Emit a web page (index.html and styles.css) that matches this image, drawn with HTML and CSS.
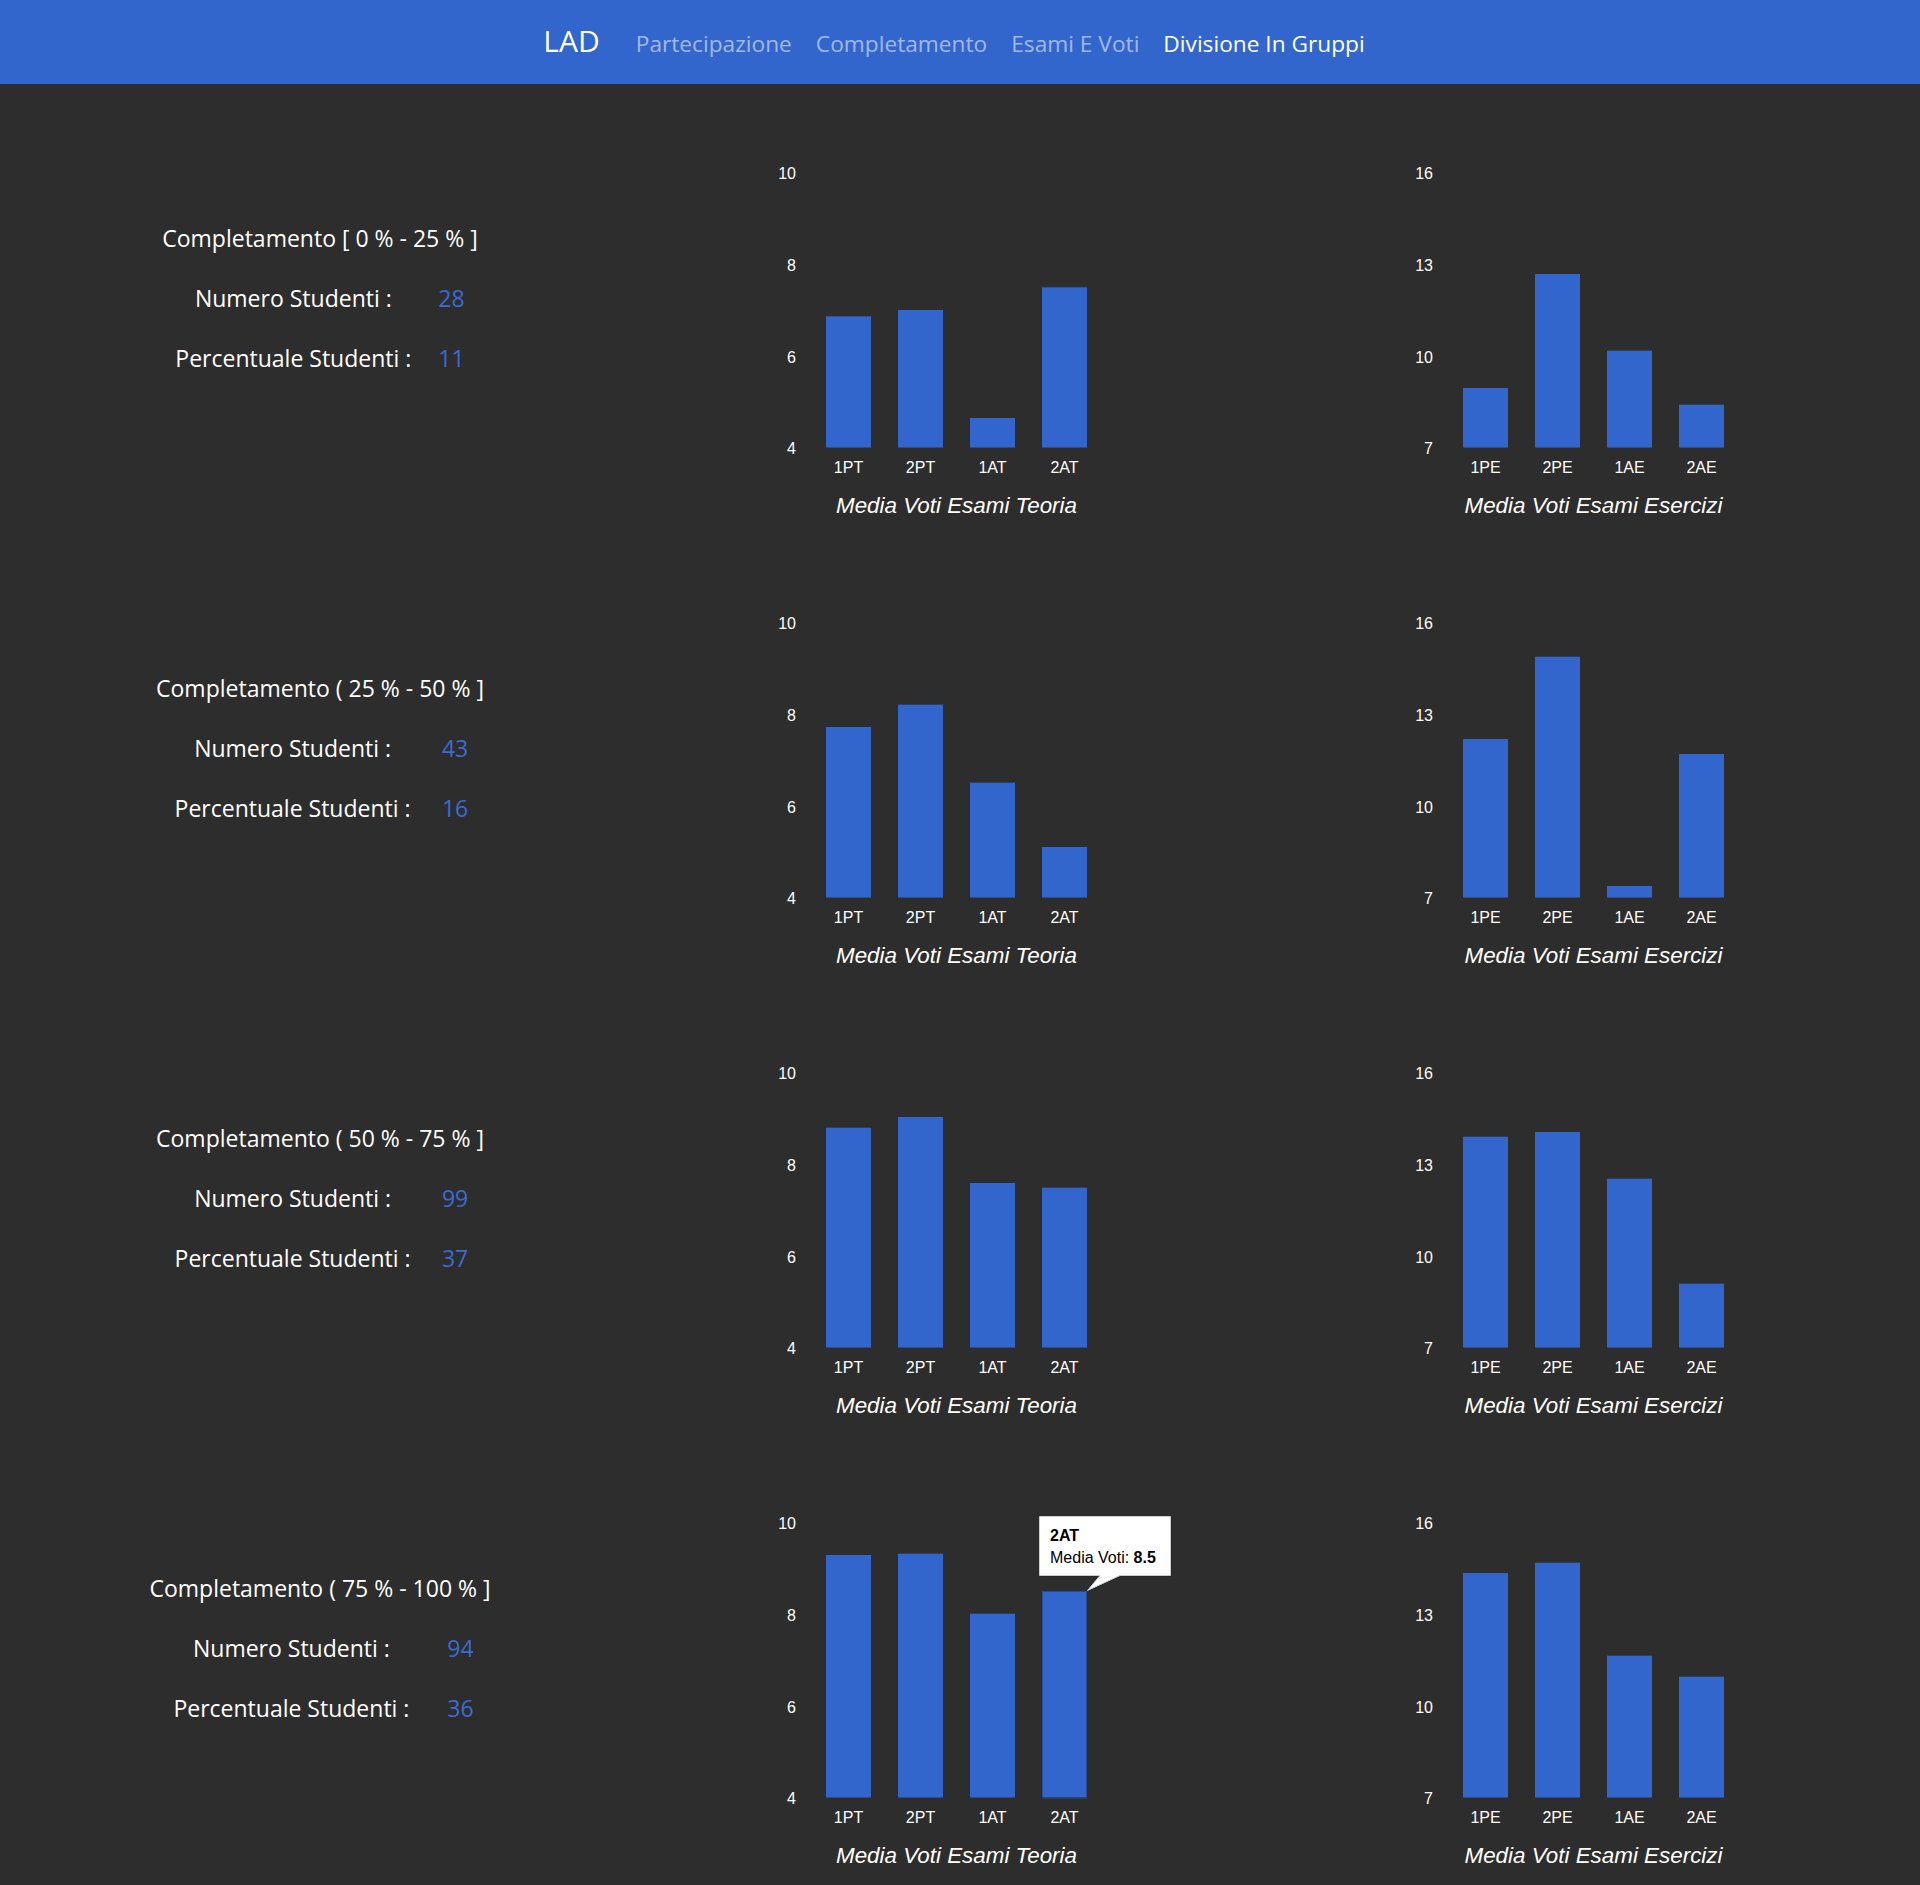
FILE: index.html
```html
<!DOCTYPE html>
<html lang="it">
<head>
<meta charset="utf-8">
<title>LAD - Divisione In Gruppi</title>
<link rel="stylesheet" href="styles.css">
</head>
<body>
<nav class="navbar">
  <a class="brand">LAD</a>
  <a class="nav-link">Partecipazione</a>
  <a class="nav-link">Completamento</a>
  <a class="nav-link">Esami E Voti</a>
  <a class="nav-link active">Divisione In Gruppi</a>
</nav>

<main class="main">
  <!-- Section 1 -->
  <section class="group">
    <div class="info">
      <table class="info-table">
        <tr><td class="title" colspan="2">Completamento [ 0 % - 25 % ]</td></tr>
        <tr><td class="label">Numero Studenti :</td><td class="value">28</td></tr>
        <tr><td class="label">Percentuale Studenti :</td><td class="value">11</td></tr>
      </table>
    </div>
    <svg class="chart" width="640" height="450">
      <g class="ylab"><text x="156" y="81.3">10</text><text x="156" y="173">8</text><text x="156" y="264.7">6</text><text x="156" y="356.3">4</text></g>
      <g class="bars">
        <rect x="186" y="218.3" width="45" height="131.7"/>
        <rect x="258" y="212" width="45" height="138"/>
        <rect x="330" y="320" width="45" height="30"/>
        <rect x="402" y="189.3" width="45" height="160.7"/>
      </g>
      <line class="base" x1="186" y1="349.5" x2="447" y2="349.5"/>
      <g class="xlab"><text x="208.5" y="375.3">1PT</text><text x="280.5" y="375.3">2PT</text><text x="352.5" y="375.3">1AT</text><text x="424.5" y="375.3">2AT</text></g>
      <text class="ctitle" x="316.5" y="414.7">Media Voti Esami Teoria</text>
    </svg>
    <svg class="chart chart-ex" width="640" height="450">
      <g class="ylab"><text x="156" y="81.3">16</text><text x="156" y="173">13</text><text x="156" y="264.7">10</text><text x="156" y="356.3">7</text></g>
      <g class="bars">
        <rect x="186" y="290" width="45" height="60"/>
        <rect x="258" y="176" width="45" height="174"/>
        <rect x="330" y="252.7" width="45" height="97.3"/>
        <rect x="402" y="306.7" width="45" height="43.3"/>
      </g>
      <line class="base" x1="186" y1="349.5" x2="447" y2="349.5"/>
      <g class="xlab"><text x="208.5" y="375.3">1PE</text><text x="280.5" y="375.3">2PE</text><text x="352.5" y="375.3">1AE</text><text x="424.5" y="375.3">2AE</text></g>
      <text class="ctitle" x="316.5" y="414.7">Media Voti Esami Esercizi</text>
    </svg>
  </section>

  <!-- Section 2 -->
  <section class="group">
    <div class="info">
      <table class="info-table">
        <tr><td class="title" colspan="2">Completamento ( 25 % - 50 % ]</td></tr>
        <tr><td class="label">Numero Studenti :</td><td class="value">43</td></tr>
        <tr><td class="label">Percentuale Studenti :</td><td class="value">16</td></tr>
      </table>
    </div>
    <svg class="chart" width="640" height="450">
      <g class="ylab"><text x="156" y="81.3">10</text><text x="156" y="173">8</text><text x="156" y="264.7">6</text><text x="156" y="356.3">4</text></g>
      <g class="bars">
        <rect x="186" y="179" width="45" height="171"/>
        <rect x="258" y="156.7" width="45" height="193.3"/>
        <rect x="330" y="234.7" width="45" height="115.3"/>
        <rect x="402" y="299" width="45" height="51"/>
      </g>
      <line class="base" x1="186" y1="349.5" x2="447" y2="349.5"/>
      <g class="xlab"><text x="208.5" y="375.3">1PT</text><text x="280.5" y="375.3">2PT</text><text x="352.5" y="375.3">1AT</text><text x="424.5" y="375.3">2AT</text></g>
      <text class="ctitle" x="316.5" y="414.7">Media Voti Esami Teoria</text>
    </svg>
    <svg class="chart chart-ex" width="640" height="450">
      <g class="ylab"><text x="156" y="81.3">16</text><text x="156" y="173">13</text><text x="156" y="264.7">10</text><text x="156" y="356.3">7</text></g>
      <g class="bars">
        <rect x="186" y="191" width="45" height="159"/>
        <rect x="258" y="108.7" width="45" height="241.3"/>
        <rect x="330" y="338" width="45" height="12"/>
        <rect x="402" y="206" width="45" height="144"/>
      </g>
      <line class="base" x1="186" y1="349.5" x2="447" y2="349.5"/>
      <g class="xlab"><text x="208.5" y="375.3">1PE</text><text x="280.5" y="375.3">2PE</text><text x="352.5" y="375.3">1AE</text><text x="424.5" y="375.3">2AE</text></g>
      <text class="ctitle" x="316.5" y="414.7">Media Voti Esami Esercizi</text>
    </svg>
  </section>

  <!-- Section 3 -->
  <section class="group">
    <div class="info">
      <table class="info-table">
        <tr><td class="title" colspan="2">Completamento ( 50 % - 75 % ]</td></tr>
        <tr><td class="label">Numero Studenti :</td><td class="value">99</td></tr>
        <tr><td class="label">Percentuale Studenti :</td><td class="value">37</td></tr>
      </table>
    </div>
    <svg class="chart" width="640" height="450">
      <g class="ylab"><text x="156" y="81.3">10</text><text x="156" y="173">8</text><text x="156" y="264.7">6</text><text x="156" y="356.3">4</text></g>
      <g class="bars">
        <rect x="186" y="129.7" width="45" height="220.3"/>
        <rect x="258" y="119" width="45" height="231"/>
        <rect x="330" y="185" width="45" height="165"/>
        <rect x="402" y="189.7" width="45" height="160.3"/>
      </g>
      <line class="base" x1="186" y1="349.5" x2="447" y2="349.5"/>
      <g class="xlab"><text x="208.5" y="375.3">1PT</text><text x="280.5" y="375.3">2PT</text><text x="352.5" y="375.3">1AT</text><text x="424.5" y="375.3">2AT</text></g>
      <text class="ctitle" x="316.5" y="414.7">Media Voti Esami Teoria</text>
    </svg>
    <svg class="chart chart-ex" width="640" height="450">
      <g class="ylab"><text x="156" y="81.3">16</text><text x="156" y="173">13</text><text x="156" y="264.7">10</text><text x="156" y="356.3">7</text></g>
      <g class="bars">
        <rect x="186" y="138.7" width="45" height="211.3"/>
        <rect x="258" y="134" width="45" height="216"/>
        <rect x="330" y="180.7" width="45" height="169.3"/>
        <rect x="402" y="285.7" width="45" height="64.3"/>
      </g>
      <line class="base" x1="186" y1="349.5" x2="447" y2="349.5"/>
      <g class="xlab"><text x="208.5" y="375.3">1PE</text><text x="280.5" y="375.3">2PE</text><text x="352.5" y="375.3">1AE</text><text x="424.5" y="375.3">2AE</text></g>
      <text class="ctitle" x="316.5" y="414.7">Media Voti Esami Esercizi</text>
    </svg>
  </section>

  <!-- Section 4 -->
  <section class="group">
    <div class="info">
      <table class="info-table">
        <tr><td class="title" colspan="2">Completamento ( 75 % - 100 % ]</td></tr>
        <tr><td class="label">Numero Studenti :</td><td class="value">94</td></tr>
        <tr><td class="label">Percentuale Studenti :</td><td class="value">36</td></tr>
      </table>
    </div>
    <svg class="chart" width="640" height="450">
      <g class="ylab"><text x="156" y="81.3">10</text><text x="156" y="173">8</text><text x="156" y="264.7">6</text><text x="156" y="356.3">4</text></g>
      <g class="bars">
        <rect x="186" y="107" width="45" height="243"/>
        <rect x="258" y="105.7" width="45" height="244.3"/>
        <rect x="330" y="165.7" width="45" height="184.3"/>
        <rect class="hover" x="402.5" y="143.5" width="44" height="206.5"/>
      </g>
      <line class="base" x1="186" y1="349.5" x2="447" y2="349.5"/>
      <g class="xlab"><text x="208.5" y="375.3">1PT</text><text x="280.5" y="375.3">2PT</text><text x="352.5" y="375.3">1AT</text><text x="424.5" y="375.3">2AT</text></g>
      <text class="ctitle" x="316.5" y="414.7">Media Voti Esami Teoria</text>
      <g class="tooltip">
        <path class="tip-shadow" d="M400.5 69.5 H531.5 V128.5 H481 L448.5 143.5 L461 128.5 H400.5 Z"/>
        <path class="tip-box" d="M399.5 68.5 H530.5 V127.5 H480 L447.5 142.5 L460 127.5 H399.5 Z"/>
        <text class="tip-text tip-bold" x="410" y="93">2AT</text>
        <text class="tip-text" x="410" y="115">Media Voti: <tspan class="tip-bold">8.5</tspan></text>
      </g>
    </svg>
    <svg class="chart chart-ex" width="640" height="450">
      <g class="ylab"><text x="156" y="81.3">16</text><text x="156" y="173">13</text><text x="156" y="264.7">10</text><text x="156" y="356.3">7</text></g>
      <g class="bars">
        <rect x="186" y="125" width="45" height="225"/>
        <rect x="258" y="114.7" width="45" height="235.3"/>
        <rect x="330" y="207.7" width="45" height="142.3"/>
        <rect x="402" y="228.7" width="45" height="121.3"/>
      </g>
      <line class="base" x1="186" y1="349.5" x2="447" y2="349.5"/>
      <g class="xlab"><text x="208.5" y="375.3">1PE</text><text x="280.5" y="375.3">2PE</text><text x="352.5" y="375.3">1AE</text><text x="424.5" y="375.3">2AE</text></g>
      <text class="ctitle" x="316.5" y="414.7">Media Voti Esami Esercizi</text>
    </svg>
  </section>
</main>
</body>
</html>
```
FILE: styles.css
```css
html, body {
  margin: 0;
  padding: 0;
}

body {
  background: #2d2d2d;
  font-family: "Open Sans", "Noto Sans", sans-serif;
  color: #ffffff;
}

.navbar {
  height: 84px;
  box-sizing: border-box;
  background: #3366cc;
  display: flex;
  justify-content: center;
  align-items: baseline;
  padding-top: 20px;
  padding-right: 12px;
  gap: 24px;
}

.brand {
  font-size: 30px;
  line-height: normal;
  color: #ffffff;
  margin-right: 12px;
}

.nav-link {
  font-size: 22.7px;
  line-height: normal;
  color: rgba(255, 255, 255, 0.55);
}

.nav-link.active {
  color: #ffffff;
}

.main {
  padding-top: 14px;
}

.group {
  display: grid;
  grid-template-columns: 640px 640px 640px;
  height: 450px;
}

.info {
  display: flex;
  justify-content: center;
  align-items: flex-start;
  padding-top: 110px;
}

.info-table {
  border-collapse: collapse;
  font-size: 23px;
}

.info-table td {
  height: 60px;
  padding: 0 15px;
  text-align: center;
  vertical-align: middle;
  white-space: nowrap;
}

.info-table td.label {
  padding-right: 12px;
}

.info-table td.title {
  padding: 0;
}

.info-table td.value {
  color: #3b6bd3;
}

.chart {
  display: block;
  font-family: "Liberation Sans", Arial, sans-serif;
}

.chart-ex {
  margin-left: -3px;
}

.ylab text {
  font-size: 16px;
  fill: #ffffff;
  text-anchor: end;
}

.xlab text {
  font-size: 16px;
  fill: #ffffff;
  text-anchor: middle;
}

.ctitle {
  font-size: 22.4px;
  font-style: italic;
  fill: #ffffff;
  text-anchor: middle;
}

.bars rect {
  fill: #3366cc;
}

.bars rect.hover {
  stroke: #264c99;
  stroke-width: 1;
}

.base {
  stroke: #2d2d2d;
  stroke-opacity: 0.45;
  stroke-width: 1;
}

.tip-shadow {
  fill: #000000;
  fill-opacity: 0.25;
}

.tip-box {
  fill: #ffffff;
  stroke: #cccccc;
  stroke-width: 1;
}

.tip-text {
  font-size: 16px;
  fill: #000000;
}

.tip-bold {
  font-weight: bold;
}
```
